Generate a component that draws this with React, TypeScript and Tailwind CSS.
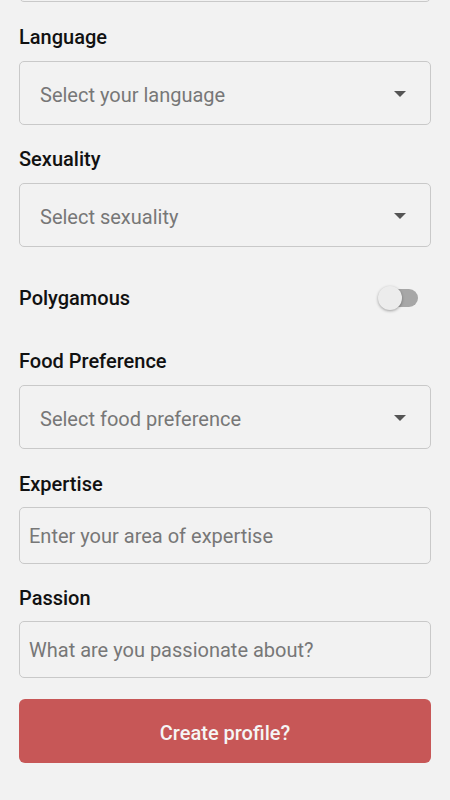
import { ReactNode } from 'react';

function Label({ children, className = '' }: { children: ReactNode; className?: string }) {
  return <p className={`h-6 leading-6 text-[20px] font-medium text-[#111111] ${className}`}>{children}</p>;
}

function SelectBox({ placeholder }: { placeholder: string }) {
  return (
    <div className="mt-3 h-16 flex items-center justify-between rounded-[5px] border border-[#c9c9c9] bg-[#f2f2f2] pl-5 pr-[24px]">
      <span className="pt-[4px] text-[20px] text-[#777777]">{placeholder}</span>
      <svg width="12" height="6" viewBox="0 0 12 6" className="mt-[1px]">
        <path d="M0 0 L12 0 L6 6 Z" fill="#555555" />
      </svg>
    </div>
  );
}

function TextBox({ placeholder }: { placeholder: string }) {
  return (
    <div className="mt-[11px] h-[57px] flex items-center rounded-[5px] border border-[#c9c9c9] bg-[#f2f2f2] px-[9px]">
      <span className="pt-[1px] text-[20px] text-[#777777]">{placeholder}</span>
    </div>
  );
}

export default function App() {
  return (
    <div className="min-h-[800px] bg-[#f2f2f2] overflow-hidden" style={{ fontFamily: 'Roboto, "Noto Sans", sans-serif' }}>
      <div className="px-[19px] pb-10">
        {/* previous field, scrolled off the top */}
        <div className="-mt-[55px] h-[57px] rounded-[5px] border border-[#c9c9c9]" />

        <Label className="mt-[23px]">Language</Label>
        <SelectBox placeholder="Select your language" />

        <Label className="mt-[22px]">Sexuality</Label>
        <SelectBox placeholder="Select sexuality" />

        <div className="mt-[22px] h-[58px] flex items-center justify-between">
          <span className="text-[20px] font-medium text-[#111111]">Polygamous</span>
          <div className="relative mr-[13px] h-[18px] w-[36px] rounded-full bg-[#a7a7a7]">
            <div className="absolute -left-[4px] -top-[3px] h-[24px] w-[24px] rounded-full bg-[#ececec] shadow-[0_1px_3px_rgba(0,0,0,0.35)]" />
          </div>
        </div>

        <Label className="mt-[22px]">Food Preference</Label>
        <SelectBox placeholder="Select food preference" />

        <Label className="mt-[23px]">Expertise</Label>
        <TextBox placeholder="Enter your area of expertise" />

        <Label className="mt-[22px]">Passion</Label>
        <TextBox placeholder="What are you passionate about?" />

        <button className="mt-[21px] h-16 w-full rounded-[6px] bg-[#c75757] pt-[3px] text-[20px] font-medium text-[#f5f5f5]">
          Create profile?
        </button>
      </div>
    </div>
  );
}
